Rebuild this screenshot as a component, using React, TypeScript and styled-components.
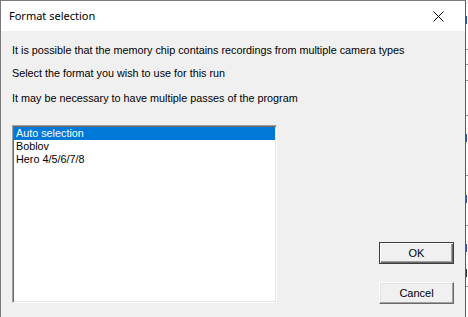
import React, { useState } from 'react'
import styled, { createGlobalStyle } from 'styled-components'

const GlobalStyle = createGlobalStyle`
  html, body {
    margin: 0;
    padding: 0;
    background: #ffffff;
  }
  #root {
    width: 468px;
    height: 317px;
    overflow: hidden;
  }
`

const formats = ['Auto selection', 'Boblov', 'Hero 4/5/6/7/8']

const App = () => {
  const [selected, setSelected] = useState(0)
  return (
    <>
      <GlobalStyle />
      <Screen>
        <Dialog>
          <TitleBar>
            <Title>Format selection</Title>
            <CloseButton aria-label="Close">
              <svg width="11" height="11" viewBox="0 0 11 11">
                <path d="M0.5 0.5 L10.5 10.5 M10.5 0.5 L0.5 10.5" stroke="#000" strokeWidth="1" fill="none" />
              </svg>
            </CloseButton>
          </TitleBar>
          <Client>
            <Message>It is possible that the memory chip contains recordings from multiple camera types</Message>
            <Message $gap={10}>Select the format you wish to use for this run</Message>
            <Message $gap={12}>It may be necessary to have multiple passes of the program</Message>
            <Body>
              <ListBox>
                {formats.map((f, i) => (
                  <ListItem key={f} $selected={i === selected} onClick={() => setSelected(i)}>
                    {f}
                  </ListItem>
                ))}
              </ListBox>
              <ButtonColumn>
                <Button $default>OK</Button>
                <Button>Cancel</Button>
              </ButtonColumn>
            </Body>
          </Client>
        </Dialog>
        <BackWindow>
          <Mark $top={16} $color="#2b4fa8" />
          <Rule $top={49} />
          <Rule $top={64} />
          <Rule $top={80} />
          <Rule $top={115} />
          <Mark $top={134} $color="#2b4fa8" />
          <Rule $top={175} />
          <Mark $top={195} $color="#2b4fa8" />
          <Rule $top={225} />
          <Mark $top={244} $color="#2b4fa8" />
          <Mark $top={269} $color="#333" />
          <Rule $top={286} />
        </BackWindow>
      </Screen>
    </>
  )
}

export default App

const Screen = styled.div`
  display: flex;
  width: 468px;
  height: 317px;
`
const Dialog = styled.div`
  width: 466px;
  height: 317px;
  box-sizing: border-box;
  border: 1px solid #7a7a7a;
  border-bottom: none;
  border-right-color: #5a5a5a;
  display: flex;
  flex-direction: column;
  font-family: "Liberation Sans", Arial, sans-serif;
`
const TitleBar = styled.div`
  height: 30px;
  background: #ffffff;
  display: flex;
  align-items: center;
  justify-content: space-between;
  padding-left: 8px;
  flex-shrink: 0;
`
const Title = styled.div`
  font-family: "Noto Sans", "Open Sans", sans-serif;
  font-size: 11px;
  color: #000000;
  margin-top: -1px;
`
const CloseButton = styled.div`
  width: 46px;
  height: 30px;
  display: flex;
  align-items: center;
  justify-content: center;
  margin-right: 4px;
`
const Client = styled.div`
  flex: 1;
  background: #f0f0f0;
  padding: 13px 0 0 11px;
  display: flex;
  flex-direction: column;
`
const Message = styled.div<{ $gap?: number }>`
  font-size: 10.8px;
  line-height: 13px;
  color: #000000;
  margin-top: ${p => p.$gap ?? 0}px;
`
const Body = styled.div`
  display: flex;
  margin-top: 20px;
`
const ListBox = styled.div`
  width: 265px;
  height: 178px;
  box-sizing: border-box;
  background: #ffffff;
  border: 1px solid;
  border-color: #a0a0a0 #ffffff #ffffff #a0a0a0;
  box-shadow: inset 1px 1px 0 #696969, inset -1px -1px 0 #e3e3e3;
  padding: 1px 1px 0 1px;
`
const ListItem = styled.div<{ $selected?: boolean }>`
  font-size: 10.8px;
  line-height: 13px;
  height: 13px;
  padding-left: 2px;
  color: ${p => (p.$selected ? '#ffffff' : '#000000')};
  background: ${p => (p.$selected ? '#0078d7' : 'transparent')};
  cursor: default;
`
const ButtonColumn = styled.div`
  margin-left: 102px;
  padding-top: 117px;
  display: flex;
  flex-direction: column;
  gap: 18px;
`
const Button = styled.div<{ $default?: boolean }>`
  width: 75px;
  height: 22px;
  box-sizing: border-box;
  display: flex;
  align-items: center;
  justify-content: center;
  font-size: 11px;
  color: #000000;
  background: #f0f0f0;
  border: 1px solid;
  border-color: ${p => (p.$default ? '#3c3c3c' : '#ffffff #696969 #696969 #ffffff')};
  box-shadow: ${p =>
    p.$default
      ? 'inset 1px 1px 0 #ffffff, inset -1px -1px 0 #696969, inset -2px -2px 0 #a0a0a0'
      : 'inset -1px -1px 0 #a0a0a0, inset 1px 1px 0 #e3e3e3'};
`
const BackWindow = styled.div`
  position: relative;
  width: 2px;
  height: 317px;
  background: #ffffff;
`
const Rule = styled.div<{ $top: number }>`
  position: absolute;
  left: 0;
  top: ${p => p.$top}px;
  width: 2px;
  height: 1px;
  background: #8a8a8a;
`
const Mark = styled.div<{ $top: number; $color: string }>`
  position: absolute;
  left: 0;
  top: ${p => p.$top}px;
  width: 1px;
  height: 8px;
  background: ${p => p.$color};
`
